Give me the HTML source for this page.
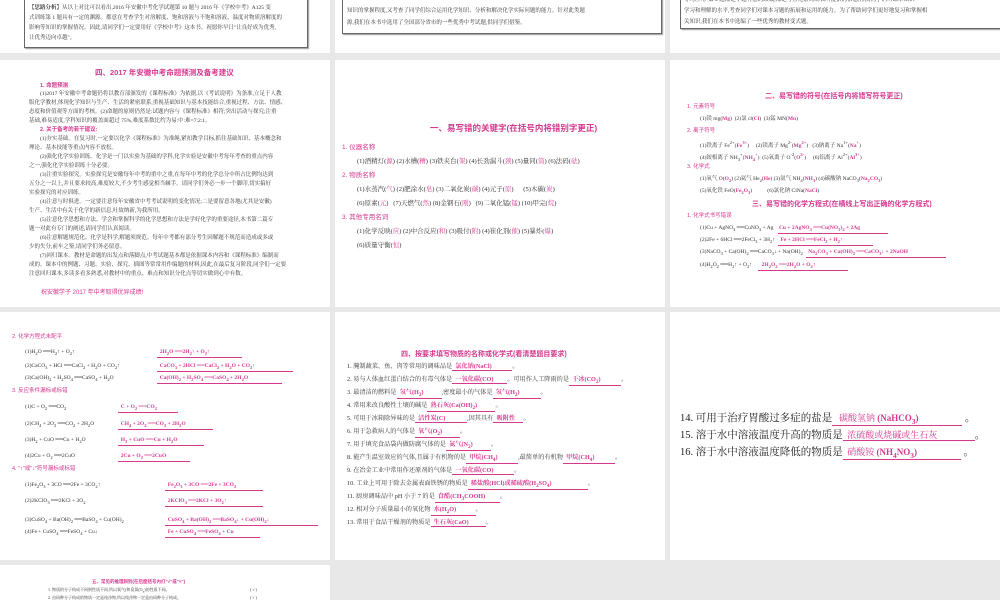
<!DOCTYPE html>
<html><head><meta charset="utf-8"><style>
*{margin:0;padding:0;box-sizing:border-box}
body{width:1000px;height:600px;background:#e8e8e8;position:relative;overflow:hidden;font-family:"Liberation Serif","Noto Serif CJK SC","Noto Sans CJK SC",serif;color:#333}
.s{position:absolute;background:#fff;overflow:hidden}
.t{position:absolute;white-space:nowrap;font-size:5.5px;line-height:1}
.p{color:#d6388f}
.h{color:#d6388f;font-family:"Liberation Sans","Noto Sans CJK SC",sans-serif;font-weight:bold}
.u{border-bottom:0.6px solid #d6388f;color:#d6388f;display:inline-block;font-weight:bold}
.box{position:absolute;border:1px solid #666;border-top:none;box-shadow:1px 1px 1px #999}
</style></head><body>

<!-- Row 0 -->
<div class="s" style="left:0;top:0;width:330px;height:53px">
 <div class="box" style="left:24px;top:-2px;width:284px;height:50px"></div>
 <div class="t" style="left:29px;top:6px"><b>【思路分析】</b>从以上对比可以看出,2016 年安徽中考化学试题第 10 题与 2016 年《学校中考》A125 变</div>
 <div class="t" style="left:29px;top:16px">式训练第 1 题具有一定的渊源。都意在考查学生对溶解度、饱和溶液与不饱和溶液、温度对物质溶解度的</div>
 <div class="t" style="left:29px;top:26px">影响等知识的掌握情况。因此,请同学们一定要用好《学校中考》这本书。祝愿你早日"让良好成为优秀,</div>
 <div class="t" style="left:29px;top:36px">让优秀迈向卓越"。</div>
</div>
<div class="s" style="left:335px;top:0;width:330px;height:53px">
 <div class="box" style="left:7px;top:-2px;width:320px;height:36px"></div>
 <div class="t" style="left:12px;top:9px">知识的掌握程度,又考查了同学们综合运用化学知识、分析和解决化学实际问题的能力。针对此类题</div>
 <div class="t" style="left:12px;top:21px">源,我们在本书中选用了全国部分省市的一些优秀中考试题,供同学们借鉴。</div>
</div>
<div class="s" style="left:670px;top:0;width:330px;height:53px">
 <div class="box" style="left:10px;top:-2px;width:322px;height:31px"></div>
 <div class="t" style="left:14px;top:-2px">等均应用"第 2 题都是小题有意的改编,都是考查元素周期表所提供的信息,检测同学们对课本知识</div>
 <div class="t" style="left:14px;top:9px">学习和理解的水平,考查同学们对课本习题的拓展和运用的能力。为了帮助同学们更好地复习和掌握相</div>
 <div class="t" style="left:14px;top:20px">关知识,我们在本书中选编了一些优秀的教材变式题。</div>
</div>

<!-- Row 1 col1 -->
<div class="s" style="left:0;top:60px;width:330px;height:247px">
 <div class="t h" style="left:95px;top:9px;font-size:7.5px">四、2017 年安徽中考命题预测及备考建议</div>
 <div class="t h" style="left:40px;top:24px;font-size:5.5px">1. 命题预测</div>
 <div class="t" style="left:40px;top:32px">(1)2017 年安徽中考命题仍将以教育部颁发的《课程标准》为依据,以《考试说明》为条准,立足于人教</div>
 <div class="t" style="left:29px;top:41px">版化学教材,体现化学知识与生产、生活的紧密联系,重视基础知识与基本技能结合,重视过程、方法、情感、</div>
 <div class="t" style="left:29px;top:50px">态度和价值观等方面的考核。(2)命题的原则仍然是:试题内容与《课程标准》相符;突出活动与探究;注重</div>
 <div class="t" style="left:29px;top:59px">基础,难易适度,学科知识的覆盖面超过 75%,难度系数比约为易:中:难=7:2:1。</div>
 <div class="t h" style="left:40px;top:68px">2. 关于备考的若干建议:</div>
 <div class="t" style="left:40px;top:77px">(1)夯实基础。在复习时,一定要以化学《课程标准》为准绳,紧扣教学目标,抓住基础知识、基本概念和</div>
 <div class="t" style="left:29px;top:86px">理论、基本技能等重点内容不放松。</div>
 <div class="t" style="left:40px;top:95px">(2)强化化学实验训练。化学是一门以实验为基础的学科,化学实验是安徽中考每年考查的重点内容</div>
 <div class="t" style="left:29px;top:104px">之一,强化化学实验训练十分必要。</div>
 <div class="t" style="left:40px;top:113px">(3)注重实验探究。实验探究是安徽每年中考的重中之重,在每年中考的化学总分中所占比例均达到</div>
 <div class="t" style="left:29px;top:122px">五分之一以上,并且要求较高,难度较大,不少考生感觉相当棘手。请同学们务必一步一个脚印,切实搞好</div>
 <div class="t" style="left:29px;top:131px">实验探究的对应训练。</div>
 <div class="t" style="left:40px;top:140px">(4)注意与时俱进。一定要注意每年安徽省中考考试说明的变化情况;二是要留意各地(尤其是安徽)</div>
 <div class="t" style="left:29px;top:149px">生产、生活中有关于化学的新信息,吐故纳新,为我所用。</div>
 <div class="t" style="left:40px;top:158px">(5)注意化学思想和方法。学会和掌握科学的化学思想和方法是学好化学的重要途径,本书第二篇专</div>
 <div class="t" style="left:29px;top:167px">题一对此有专门的阐述,请同学们认真阅读。</div>
 <div class="t" style="left:40px;top:176px">(6)注意解题规范化。化学是科学,解题须规范。每年中考都有部分考生因解题不规范而造成或多或</div>
 <div class="t" style="left:29px;top:185px">少的失分,前车之鉴,请同学们务必留意。</div>
 <div class="t" style="left:40px;top:194px">(7)回归课本。教材是命题的出发点和落脚点,中考试题基本都是依据课本内容和《课程标准》编制而</div>
 <div class="t" style="left:29px;top:203px">成的。课本中的例题、习题、实验、探究、插图等常常用作编题的材料,因此,在最后复习阶段,同学们一定要</div>
 <div class="t" style="left:29px;top:212px">注意回归课本,多读多看多熟悉,对教材中的重点、难点和知识分化点等切实做到心中有数。</div>
 <div class="t h" style="left:41px;top:230px;font-size:6px;font-weight:normal">祝安徽学子 2017 年中考取得优异成绩!</div>
</div>

<!-- Row 1 col2 -->
<div class="s" style="left:335px;top:60px;width:330px;height:247px">
 <div class="t h" style="left:95px;top:64px;font-size:8.5px">一、易写错的关键字(在括号内将错别字更正)</div>
 <div class="t h" style="left:7px;top:85px;font-size:6.5px;font-weight:normal">1. 仪器名称</div>
 <div class="t" style="left:22px;top:99px;font-size:6.5px">(1)酒精灯(<span class="p">源</span>) (2)水槽(<span class="p">糟</span>) (3)铁夹台(<span class="p">架</span>) (4)长劲漏斗(<span class="p">颈</span>) (5)量同(<span class="p">筒</span>) (6)法码(<span class="p">砝</span>)</div>
 <div class="t h" style="left:7px;top:113px;font-size:6.5px;font-weight:normal">2. 物质名称</div>
 <div class="t" style="left:22px;top:127px;font-size:6.5px">(1)水蒸汽(<span class="p">气</span>) (2)肥涂水(<span class="p">皂</span>) (3)二氧化炭(<span class="p">碳</span>) (4)元子(<span class="p">原</span>) &nbsp;&nbsp;&nbsp;&nbsp;&nbsp;(5)木碳(<span class="p">炭</span>)</div>
 <div class="t" style="left:22px;top:141px;font-size:6.5px">(6)原素(<span class="p">元</span>) &nbsp;&nbsp;(7)天燃气(<span class="p">然</span>) (8)金钢石(<span class="p">刚</span>) &nbsp;&nbsp;(9)二氧化锰(<span class="p">锰</span>) (10)甲完(<span class="p">烷</span>)</div>
 <div class="t h" style="left:7px;top:155px;font-size:6.5px;font-weight:normal">3. 其他专用名词</div>
 <div class="t" style="left:22px;top:169px;font-size:6.5px">(1)化学反映(<span class="p">应</span>) (2)中合反应(<span class="p">和</span>) (3)吸付(<span class="p">附</span>) (4)崔化剂(<span class="p">催</span>) (5)暴炸(<span class="p">爆</span>)</div>
 <div class="t" style="left:22px;top:183px;font-size:6.5px">(6)质量守衡(<span class="p">恒</span>)</div>
</div>

<!-- Row 1 col3 -->
<div class="s" style="left:670px;top:60px;width:330px;height:247px">
 <div class="t h" style="left:95px;top:33px;font-size:7px">二、易写错的符号(在括号内将错写符号更正)</div>
 <div class="t h" style="left:17px;top:45px;font-weight:normal">1. 元素符号</div>
 <div class="t" style="left:30px;top:57px">(1)镁 mg(<b class="p">Mg</b>) &nbsp;(2)氯 cl(<b class="p">Cl</b>) &nbsp;(3)锰 MN(<b class="p">Mn</b>)</div>
 <div class="t h" style="left:17px;top:69px;font-weight:normal">2. 离子符号</div>
 <div class="t" style="left:30px;top:81px">(1)铁离子 Fe<sup>2+</sup>(<b class="p">Fe<sup>3+</sup></b>) &nbsp;&nbsp;&nbsp;&nbsp;(2)镁离子 Mg<sup>2-</sup>(<b class="p">Mg<sup>2+</sup></b>) &nbsp;&nbsp;(3)钠离子 Na<sup>1+</sup>(<b class="p">Na<sup>+</sup></b>)</div>
 <div class="t" style="left:30px;top:93px">(4)铵根离子 NH<sub>3</sub><sup>+</sup>(<b class="p">NH<sub>4</sub><sup>+</sup></b>) &nbsp;(5)氧离子 O<sup>-2</sup>(<b class="p">O<sup>2-</sup></b>) &nbsp;&nbsp;&nbsp;&nbsp;(6)铝离子 Al<sup>2+</sup>(<b class="p">Al<sup>3+</sup></b>)</div>
 <div class="t h" style="left:17px;top:105px;font-weight:normal">3. 化学式</div>
 <div class="t" style="left:30px;top:117px">(1)氧气 O(<b class="p">O<sub>2</sub></b>) (2)氦气 He<sub>2</sub>(<b class="p">He</b>) (3)氨气 NH<sub>4</sub>(<b class="p">NH<sub>3</sub></b>) (4)碳酸钠 NaCO<sub>3</sub>(<b class="p">Na<sub>2</sub>CO<sub>3</sub></b>)</div>
 <div class="t" style="left:30px;top:129px">(5)氧化铁 FeO(<b class="p">Fe<sub>2</sub>O<sub>3</sub></b>) &nbsp;&nbsp;&nbsp;&nbsp;&nbsp;&nbsp;&nbsp;&nbsp;&nbsp;&nbsp;(6)氯化钠 ClNa(<b class="p">NaCl</b>)</div>
 <div class="t h" style="left:82px;top:141px;font-size:7px">三、易写错的化学方程式(在横线上写出正确的化学方程式)</div>
 <div class="t h" style="left:17px;top:154px;font-weight:normal">1. 化学式书写错误</div>
 <div class="t" style="left:30px;top:166px">(1)Cu + AgNO<sub>3</sub> ══CuNO<sub>3</sub> + Ag &nbsp;&nbsp;<span class="u" style="width:110px">&nbsp;Cu + 2AgNO<sub>3</sub> ══Cu(NO<sub>3</sub>)<sub>2</sub> + 2Ag</span></div>
 <div class="t" style="left:30px;top:178px">(2)2Fe + 6HCl ══2FeCl<sub>3</sub> + 3H<sub>2</sub>↑ &nbsp;<span class="u" style="width:95px">&nbsp;&nbsp;Fe + 2HCl ══FeCl<sub>2</sub> + H<sub>2</sub>↑</span></div>
 <div class="t" style="left:30px;top:190px">(3)NaCO<sub>3</sub> + Ca(OH)<sub>2</sub> ══CaCO<sub>3</sub>↓ + Na(OH)<sub>2</sub> &nbsp;<span class="u" style="width:140px">&nbsp;&nbsp;Na<sub>2</sub>CO<sub>3</sub> + Ca(OH)<sub>2</sub> ══CaCO<sub>3</sub>↓ + 2NaOH</span></div>
 <div class="t" style="left:30px;top:203px">(4)H<sub>2</sub>O<sub>2</sub> ══H<sub>2</sub>↑ + O<sub>2</sub>↑ &nbsp;&nbsp;&nbsp;<span class="u" style="width:90px">&nbsp;&nbsp;&nbsp;2H<sub>2</sub>O<sub>2</sub> ══2H<sub>2</sub>O + O<sub>2</sub>↑</span></div>
</div>

<!-- Row 2 col1 -->
<div class="s" style="left:0;top:312px;width:330px;height:248px">
 <div class="t h" style="left:12px;top:23px;font-weight:normal">2. 化学方程式未配平</div>
 <div class="t" style="left:25px;top:38px">(1)H<sub>2</sub>O ══H<sub>2</sub>↑ + O<sub>2</sub>↑</div>
 <div class="t" style="left:157px;top:38px"><span class="u" style="width:85px">&nbsp;&nbsp;2H<sub>2</sub>O ══2H<sub>2</sub>↑ + O<sub>2</sub>↑</span></div>
 <div class="t" style="left:25px;top:52px">(2)CaCO<sub>3</sub> + HCl ══CaCl<sub>2</sub> + H<sub>2</sub>O + CO<sub>2</sub>↑</div>
 <div class="t" style="left:157px;top:52px"><span class="u" style="width:136px">&nbsp;&nbsp;CaCO<sub>3</sub> + 2HCl ══CaCl<sub>2</sub> + H<sub>2</sub>O + CO<sub>2</sub>↑</span></div>
 <div class="t" style="left:25px;top:64px">(3)Ca(OH)<sub>2</sub> + H<sub>2</sub>SO<sub>4</sub> ══CaSO<sub>4</sub> + H<sub>2</sub>O</div>
 <div class="t" style="left:157px;top:64px"><span class="u" style="width:125px">&nbsp;&nbsp;Ca(OH)<sub>2</sub> + H<sub>2</sub>SO<sub>4</sub> ══CaSO<sub>4</sub> + 2H<sub>2</sub>O</span></div>
 <div class="t h" style="left:12px;top:77px;font-weight:normal">3. 反应条件漏标或标错</div>
 <div class="t" style="left:25px;top:93px">(1)C + O<sub>2</sub> ══CO<sub>2</sub></div>
 <div class="t" style="left:118px;top:93px"><span class="u" style="width:60px">&nbsp;&nbsp;C + O<sub>2</sub> ══CO<sub>2</sub></span></div>
 <div class="t" style="left:25px;top:110px">(2)CH<sub>4</sub> + 2O<sub>2</sub> ══CO<sub>2</sub> + 2H<sub>2</sub>O</div>
 <div class="t" style="left:118px;top:110px"><span class="u" style="width:95px">&nbsp;&nbsp;CH<sub>4</sub> + 2O<sub>2</sub> ══CO<sub>2</sub> + 2H<sub>2</sub>O</span></div>
 <div class="t" style="left:25px;top:126px">(3)H<sub>2</sub> + CuO ══Cu + H<sub>2</sub>O</div>
 <div class="t" style="left:118px;top:126px"><span class="u" style="width:86px">&nbsp;&nbsp;H<sub>2</sub> + CuO ══Cu + H<sub>2</sub>O</span></div>
 <div class="t" style="left:25px;top:142px">(4)2Cu + O<sub>2</sub> ══2CuO</div>
 <div class="t" style="left:118px;top:142px"><span class="u" style="width:72px">&nbsp;&nbsp;2Cu + O<sub>2</sub> ══2CuO</span></div>
 <div class="t h" style="left:12px;top:155px;font-weight:normal">4. "↑"或"↓"符号漏标或标错</div>
 <div class="t" style="left:25px;top:171px">(1)Fe<sub>2</sub>O<sub>3</sub> + 3CO ══2Fe + 3CO<sub>2</sub>↑</div>
 <div class="t" style="left:165px;top:171px"><span class="u" style="width:98px">&nbsp;&nbsp;Fe<sub>2</sub>O<sub>3</sub> + 3CO ══2Fe + 3CO<sub>2</sub></span></div>
 <div class="t" style="left:25px;top:187px">(2)2KClO<sub>3</sub> ══2KCl + 3O<sub>2</sub></div>
 <div class="t" style="left:165px;top:187px"><span class="u" style="width:98px">&nbsp;&nbsp;2KClO<sub>3</sub> ══2KCl + 3O<sub>2</sub>↑</span></div>
 <div class="t" style="left:25px;top:206px">(3)CuSO<sub>4</sub> + Ba(OH)<sub>2</sub> ══BaSO<sub>4</sub> + Cu(OH)<sub>2</sub></div>
 <div class="t" style="left:165px;top:206px"><span class="u" style="width:153px">&nbsp;&nbsp;CuSO<sub>4</sub> + Ba(OH)<sub>2</sub> ══BaSO<sub>4</sub>↓ + Cu(OH)<sub>2</sub>↓</span></div>
 <div class="t" style="left:25px;top:218px">(4)Fe + CuSO<sub>4</sub> ══FeSO<sub>4</sub> + Cu↓</div>
 <div class="t" style="left:165px;top:218px"><span class="u" style="width:95px">&nbsp;&nbsp;Fe + CuSO<sub>4</sub> ══FeSO<sub>4</sub> + Cu</span></div>
</div>

<!-- Row 2 col2 -->
<div class="s" style="left:335px;top:312px;width:330px;height:248px">
 <div class="t h" style="left:66px;top:39px;font-size:7px">四、按要求填写物质的名称或化学式(看清楚题目要求)</div>
 <div class="t" style="left:12px;top:52px;font-size:6.2px">1. 腌制蔬菜、鱼、肉等常用的调味品是<span class="u" style="width:60px">&nbsp;&nbsp;氯化钠(NaCl)</span>。</div>
 <div class="t" style="left:12px;top:65px;font-size:6.2px">2. 易与人体血红蛋白结合的有毒气体是<span class="u" style="width:55px">&nbsp;&nbsp;一氧化碳(CO)</span>。可用作人工降雨的是<span class="u" style="width:52px">&nbsp;&nbsp;干冰(CO<sub>2</sub>)</span>。</div>
 <div class="t" style="left:12px;top:78px;font-size:6.2px">3. 最清洁的燃料是<span class="u" style="width:45px">&nbsp;&nbsp;氢气(H<sub>2</sub>)</span>,密度最小的气体是<span class="u" style="width:48px">&nbsp;&nbsp;氢气(H<sub>2</sub>)</span>。</div>
 <div class="t" style="left:12px;top:91px;font-size:6.2px">4. 常用来改良酸性土壤的碱是<span class="u" style="width:68px">&nbsp;&nbsp;熟石灰(Ca(OH)<sub>2</sub>)</span>。</div>
 <div class="t" style="left:12px;top:104px;font-size:6.2px">5. 可用于冰箱除异味的是<span class="u" style="width:52px">&nbsp;&nbsp;活性炭(C)</span>,因其具有<span class="u" style="width:30px">&nbsp;&nbsp;吸附性</span>。</div>
 <div class="t" style="left:12px;top:117px;font-size:6.2px">6. 用于急救病人的气体是<span class="u" style="width:45px">&nbsp;&nbsp;氧气(O<sub>2</sub>)</span>。</div>
 <div class="t" style="left:12px;top:130px;font-size:6.2px">7. 用于填充食品袋内做防腐气体的是<span class="u" style="width:45px">&nbsp;&nbsp;氮气(N<sub>2</sub>)</span>。</div>
 <div class="t" style="left:12px;top:143px;font-size:6.2px">8. 能产生温室效应的气体,且属于有机物的是<span class="u" style="width:52px">&nbsp;&nbsp;甲烷(CH<sub>4</sub>)</span>,最简单的有机物<span class="u" style="width:52px">&nbsp;&nbsp;甲烷(CH<sub>4</sub>)</span>。</div>
 <div class="t" style="left:12px;top:156px;font-size:6.2px">9. 在冶金工业中常用作还原剂的气体是<span class="u" style="width:62px">&nbsp;&nbsp;一氧化碳(CO)</span>。</div>
 <div class="t" style="left:12px;top:169px;font-size:6.2px">10. 工业上可用于除去金属表面铁锈的物质是<span class="u" style="width:120px">&nbsp;&nbsp;稀盐酸(HCl)或稀硫酸(H<sub>2</sub>SO<sub>4</sub>)</span>。</div>
 <div class="t" style="left:12px;top:182px;font-size:6.2px">11. 厨房调味品中 pH 小于 7 的是<span class="u" style="width:65px">&nbsp;&nbsp;食醋(CH<sub>3</sub>COOH)</span>。</div>
 <div class="t" style="left:12px;top:195px;font-size:6.2px">12. 相对分子质量最小的氧化物<span class="u" style="width:45px">&nbsp;&nbsp;水(H<sub>2</sub>O)</span>。</div>
 <div class="t" style="left:12px;top:208px;font-size:6.2px">13. 常用于食品干燥剂的物质是<span class="u" style="width:55px">&nbsp;&nbsp;生石灰(CaO)</span>。</div>
</div>

<!-- Row 2 col3 -->
<div class="s" style="left:670px;top:312px;width:330px;height:248px">
 <div class="t" style="left:10px;top:102px;font-size:10.5px;color:#222">14. 可用于治疗胃酸过多症的盐是<span class="u" style="width:130px;font-weight:normal;font-size:9px">&nbsp;&nbsp;&nbsp;碳酸氢钠 <b>(NaHCO<sub>3</sub>)</b></span> 。</div>
 <div class="t" style="left:10px;top:119px;font-size:10.5px;color:#222">15. 溶于水中溶液温度升高的物质是<span class="u" style="width:132px;font-weight:normal;font-size:9px">&nbsp;&nbsp;浓硫酸或烧碱或生石灰</span>。</div>
 <div class="t" style="left:10px;top:136px;font-size:10.5px;color:#222">16. 溶于水中溶液温度降低的物质是<span class="u" style="width:118px;font-weight:normal;font-size:9px">&nbsp;&nbsp;硝酸铵 <b>(NH<sub>4</sub>NO<sub>3</sub>)</b></span> 。</div>
</div>

<!-- Row 3 col1 -->
<div class="s" style="left:0;top:565px;width:330px;height:35px">
 <div class="t h" style="left:92px;top:15px;font-size:4.5px">五、常见的推理辨别(在后面括号内打"√"或"×")</div>
 <div class="t" style="left:48px;top:23px;font-size:4px">1. 物质的分子构成不同则性质不同,所以氧气(和臭氧(O<sub>3</sub>)的性质不同。</div>
 <div class="t" style="left:250px;top:23px;font-size:4px">( √ )</div>
 <div class="t" style="left:48px;top:31px;font-size:4px">2. 由同种分子构成的物质一定是纯净物,所以纯净物一定是由同种分子构成。</div>
 <div class="t" style="left:250px;top:31px;font-size:4px">( × )</div>
</div>
</body></html>
